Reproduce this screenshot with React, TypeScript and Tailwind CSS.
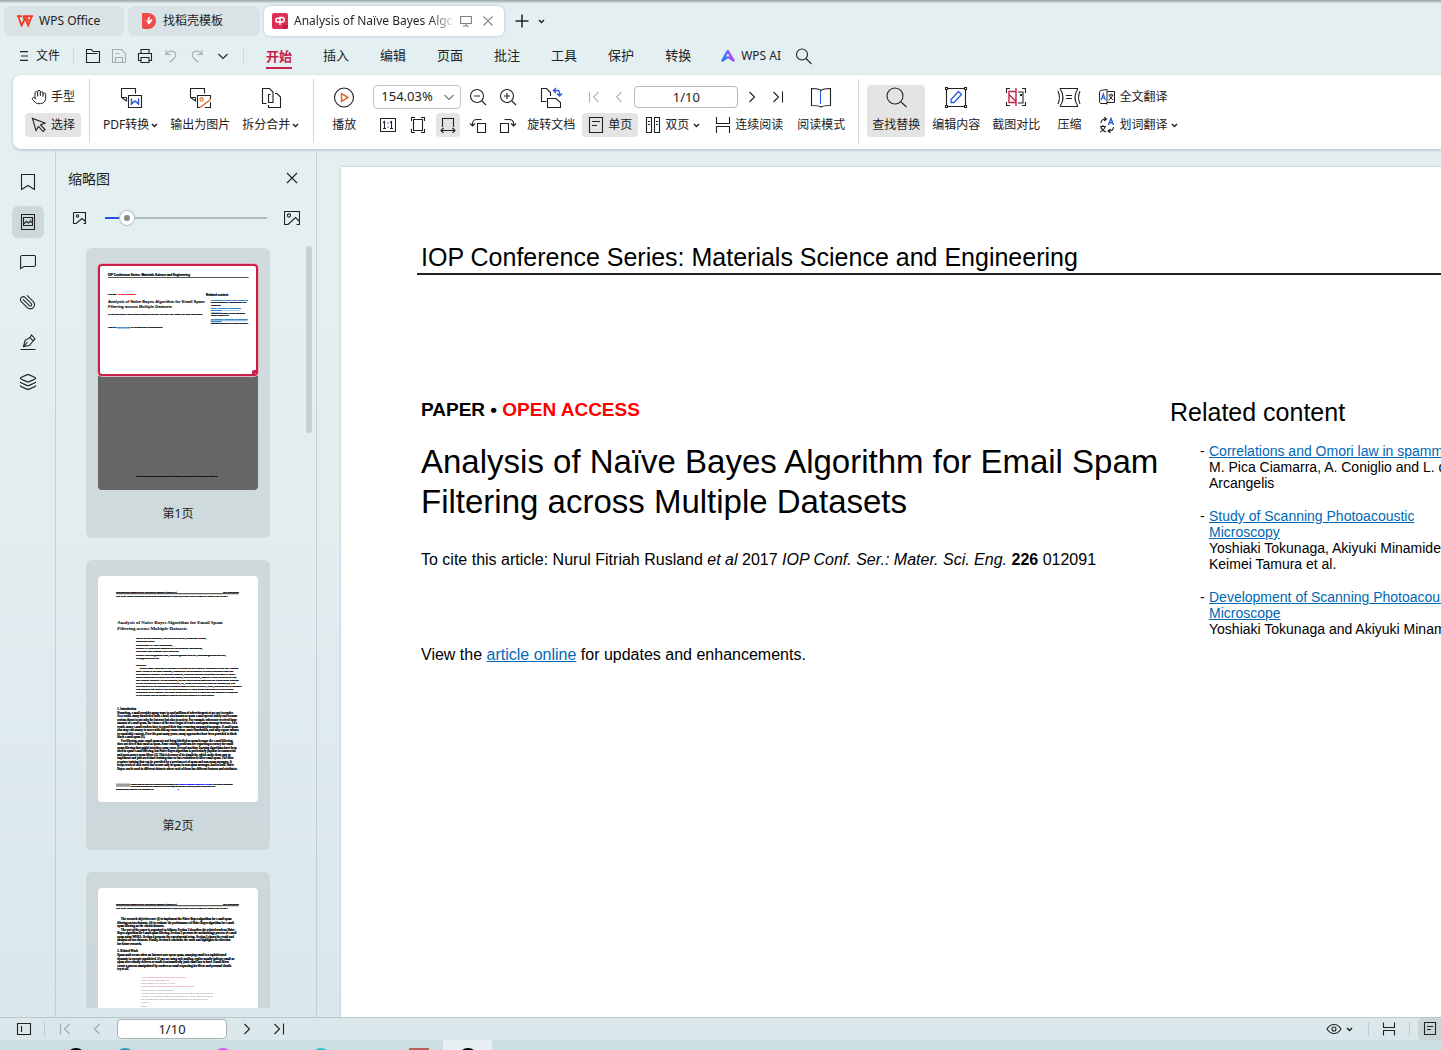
import type { ReactNode } from "react";
import { Hand, Layers, Paperclip } from "lucide-react";

type IconProps = { size?: number; className?: string; children: ReactNode };

const Icon = ({ size = 24, className = "", children }: IconProps) => (
  <svg
    width={size}
    height={size}
    viewBox={`0 0 ${size} ${size}`}
    fill="none"
    stroke="currentColor"
    strokeWidth="1.1"
    className={`shrink-0 ${className}`}
    aria-hidden="true"
  >
    {children}
  </svg>
);

const Caret = () => (
  <svg width="7" height="5" viewBox="0 0 7 5" fill="none" stroke="currentColor" strokeWidth="1.5" className="shrink-0" aria-hidden="true">
    <path d="M1 1l2.5 2.5L6 1" />
  </svg>
);

const ChevronDown = ({ className = "" }: { className?: string }) => (
  <Icon size={12} className={className}>
    <path d="M1.5 4L6 8.5 10.5 4" />
  </Icon>
);

const First = () => (
  <Icon size={16}>
    <path d="M3.5 2.5v11M12.5 3L7.5 8l5 5" />
  </Icon>
);
const Prev = () => (
  <Icon size={16}>
    <path d="M10.5 3L5.5 8l5 5" />
  </Icon>
);
const Next = () => (
  <Icon size={16}>
    <path d="M5.5 3l5 5-5 5" />
  </Icon>
);
const Last = () => (
  <Icon size={16}>
    <path d="M3.5 3l5 5-5 5M12.5 2.5v11" />
  </Icon>
);
const Close = ({ size = 12 }: { size?: number }) => (
  <Icon size={size}>
    <path d={size === 12 ? "M1.5 1.5l9 9M10.5 1.5l-9 9" : "M3 3l10 10M13 3L3 13"} />
  </Icon>
);

const SinglePage = () => (
  <Icon size={16}>
    <path d="M1.5 .5h13v15h-13zM4 4.5h8M4 8.5h5" />
  </Icon>
);
const Continuous = () => (
  <Icon size={16}>
    <path d="M1.5 0v6.5h13V0M1.5 16V9.5h13V16" />
  </Icon>
);

const Divider = ({ className = "" }: { className?: string }) => (
  <div className={`w-px shrink-0 bg-[#d3d8d9] ${className}`} />
);

/* Tall ribbon button: icon on top, label below */
const BigButton = ({ label, icon, caret, active }: { label: string; icon: ReactNode; caret?: boolean; active?: boolean }) => (
  <button className={`flex shrink-0 flex-col items-center gap-1 rounded ${active ? "bg-[#e4e4e4] px-[5px]" : ""}`}>
    <span className="flex h-6 items-center">{icon}</span>
    <span className="flex h-6 items-center gap-0.5">
      {label}
      {caret && <Caret />}
    </span>
  </button>
);

const menus = ["插入", "编辑", "页面", "批注", "工具", "保护", "转换"];

const TitleTabs = () => (
  <header className="flex shrink-0 items-end gap-1 bg-linear-to-b from-[#98a3a5] from-0% to-transparent to-10% px-1 pt-1.5">
    <button className="flex h-[30px] w-[120px] items-center gap-1.5 rounded-md bg-[#d9e2e4] pl-[13px]">
      <svg width="16" height="12" viewBox="0 0 16 12" fill="none" aria-hidden="true">
        <path d="M0 1.2h5M1.3 1.3l3.2 9.2L8 3.5l3.2 7 3.4-9.2M6 1.2h10M6.2 1.3L8 5.5M9.5 1.3l2 5" stroke="#f2361f" strokeWidth="1.8" />
      </svg>
      WPS Office
    </button>
    <button className="flex h-[30px] w-[132px] items-center gap-1.5 rounded-md bg-[#d9e2e4] pl-[13px]">
      <svg width="16" height="16" viewBox="0 0 16 16" aria-hidden="true">
        <path d="M1 0h6a8 8 0 0 1 0 16H3a2 2 0 0 1-2-2z" fill="#f04b4b" />
        <path d="M3.5 7.5c2 .2 3.3 1.8 3.8 4 2-1 4.2-3 4-5.5-1.5.3-2.7 1.2-3.3 2.5L9 3.5c-2 .7-2.8 2.5-2.2 5C6 7.7 4.7 7.2 3.5 7.5z" fill="#fff" />
      </svg>
      找稻壳模板
    </button>
    <div className="flex h-[30px] w-[240px] items-center rounded-md bg-white pl-2 pr-2.5 shadow-[0_0_3px_#aebcbf]">
      <svg width="16" height="16" viewBox="0 0 16 16" aria-hidden="true" className="shrink-0">
        <rect width="16" height="16" rx="2" fill="#dc3056" />
        <path d="M11 12h5v2a2 2 0 0 1-2 2h-3z" fill="#b81d40" />
        <path d="M8 12V4.5h2a2.3 2.3 0 0 1 0 4.6H5.8a1.9 1.9 0 0 1 0-3.800H8" fill="none" stroke="#fff" strokeWidth="1.5" />
      </svg>
      <span className="ml-1.5 min-w-0 flex-1 overflow-hidden whitespace-nowrap bg-linear-to-r from-[#222] from-85% to-[#ddd] bg-clip-text text-transparent">
        Analysis of Naïve Bayes Algorithm
      </span>
      <Icon size={12} className="ml-2 text-[#808080]">
        <path d="M.6 1.5h10.8v7H.6zM3 11h6M6 8.5V11" />
      </Icon>
      <button aria-label="关闭标签" className="ml-2.5 text-[#888]">
        <Close />
      </button>
    </div>
    <button aria-label="新建" className="ml-1.5 flex h-[30px] items-center">
      <Icon size={16}>
        <path d="M8 1.5v13M1.5 8h13" strokeWidth="1.5" />
      </Icon>
    </button>
    <button aria-label="标签列表" className="ml-1 flex h-[30px] items-center">
      <Caret />
    </button>
  </header>
);

const MenuBar = () => (
  <nav className="flex h-[39px] shrink-0 items-center pl-[19px]">
    <button className="flex items-center gap-[7px]">
      <Icon size={10}>
        <path d="M1 .6h8M2 5h7M1 9.4h8" />
      </Icon>
      文件
    </button>
    <Divider className="ml-[13px] mr-[9px] h-4" />
    <div className="flex items-center gap-1.5">
      {/* quick access: open, save, print, undo, redo */}
      <button aria-label="打开" className="flex w-5 justify-center">
        <Icon size={16}>
          <path d="M1.5 14.5v-13h5l1.500 2h6.500v11zM1.500 5.500h11" />
        </Icon>
      </button>
      <button aria-label="保存" className="flex w-5 justify-center text-[#a3acae]">
        <Icon size={16}>
          <path d="M1.5 1.5h9l4 4v9h-13zM4.500 14.500v-5h7v5M4.500 5.500h4" />
        </Icon>
      </button>
      <button aria-label="打印" className="flex w-5 justify-center">
        <Icon size={16}>
          <path d="M4 5.5v-4h8v4M3.500 12.500h-2v-7h13v7h-2M4 9.500h8v5H4z" />
        </Icon>
      </button>
      <button aria-label="撤销" className="flex w-5 justify-center text-[#a3acae]">
        <Icon size={16}>
          <path d="M3 2v4.500h4.500M3 6.500C5 3.500 8 2.500 10.500 3.500s3 4.500 1 6.500l-5 4.500" />
        </Icon>
      </button>
      <button aria-label="恢复" className="flex w-5 justify-center text-[#a3acae]">
        <Icon size={16}>
          <path d="M13 2v4.500H8.500M13 6.500C11 3.500 8 2.500 5.500 3.500s-3 4.500-1 6.500l5 4.500" />
        </Icon>
      </button>
      <button aria-label="更多" className="flex w-5 justify-center">
        <ChevronDown />
      </button>
    </div>
    <Divider className="ml-2.5 mr-[22px] h-4" />
    <div className="flex items-center gap-[31px] text-[13px]">
      <button className="border-y-2 border-t-transparent border-b-[#c8204a] py-px font-bold leading-5 text-[#c8204a]">开始</button>
      {menus.map((m) => (
        <button key={m}>{m}</button>
      ))}
    </div>
    <button className="ml-[30px] flex items-center gap-1.5">
      <svg width="14" height="12" viewBox="0 0 14 12" fill="none" aria-hidden="true">
        <path d="M1.500 10.500L6.500 1.500h1.500" stroke="#4b6bff" strokeWidth="2.400" strokeLinejoin="round" />
        <path d="M7 1.500l5.500 9M12.500 10.500L8 7.500" stroke="#a250f5" strokeWidth="2.400" strokeLinecap="round" />
        <path d="M1.500 10.500l4.500-3" stroke="#2b7bf5" strokeWidth="2.400" strokeLinecap="round" />
      </svg>
      WPS AI
    </button>
    <button aria-label="搜索" className="ml-3.5">
      <Icon size={18}>
        <circle cx="7" cy="7.5" r="5.5" />
        <path d="M11 11.500l5.500 5.500" />
      </Icon>
    </button>
  </nav>
);

const Ribbon = () => (
  <div className="ml-[13px] flex shrink-0 items-stretch whitespace-nowrap rounded-l-lg bg-white pb-3 pl-3 pt-2.5 shadow-[0_1px_3px_#aab9bc]">
    <div className="flex w-14 shrink-0 flex-col gap-1">
      <button className="flex h-6 items-center gap-1 rounded pl-1.5">
        <Hand size={16} strokeWidth={1.5} />
        手型
      </button>
      <button className="flex h-6 items-center gap-1 rounded bg-[#e4e4e4] pl-1.5">
        <Icon size={16}>
          <path d="M1.500 1.500l3.500 12 2.500-4 4.500 5 2-2-4.500-4.500 4.500-2z" />
        </Icon>
        选择
      </button>
    </div>
    <Divider className="-my-1.5 ml-2 mr-[13px]" />

    <div className="flex gap-3">
      <BigButton
        label="PDF转换"
        caret
        icon={
          <Icon>
            <path d="M7.500 12.500v3.500l-5-3.500v-9h14v5M2.500 12.500h5" />
            <path d="M9.500 10.500h13v12h-13z" />
            <path d="M12.500 13.500v5.500l3.500-3 3.500 3v-5.500" stroke="#2b5be0" strokeWidth="1.500" />
          </Icon>
        }
      />
      <BigButton
        label="输出为图片"
        icon={
          <Icon>
            <path d="M7.500 12.500v3.500l-5-3.500v-9h14v5M2.500 12.500h5" />
            <path d="M22.500 14v-3.500h-13v12H12M17 22.500h5.500V17" />
            <path d="M12 22.500l10.500-8" stroke="#e0672c" strokeWidth="1.400" />
            <circle cx="13.500" cy="14.500" r="1.600" stroke="#e0672c" />
          </Icon>
        }
      />
      <BigButton
        label="拆分合并"
        caret
        icon={
          <Icon>
            <path d="M7.500 18.500h-4v-15h7l3.500 3.500v10.500h-4.500v-8h2" />
            <path d="M16 8.500h2l3.500 3.500v10.500h-12V20" />
          </Icon>
        }
      />
    </div>
    <Divider className="-my-1.5 ml-3.5 mr-[18px]" />

    <BigButton
      label="播放"
      icon={
        <Icon>
          <circle cx="12" cy="12.5" r="9.5" />
          <path d="M9.5 8.5v8l6.500-4z" stroke="#e0672c" strokeWidth="1.500" />
        </Icon>
      }
    />
    <div className="ml-[17px] flex w-[88px] shrink-0 flex-col gap-1">
      <div className="grid h-6 items-center">
        <select aria-label="缩放比例" defaultValue="154.03%" className="col-start-1 row-start-1 h-6 w-full appearance-none rounded border border-[#c4c4c4] bg-white pl-[7px] text-[13px]">
          <option>154.03%</option>
        </select>
        <ChevronDown className="pointer-events-none col-start-1 row-start-1 mr-1.5 justify-self-end text-[#777]" />
      </div>
      <div className="flex gap-1.5 pl-[3px]">
        <button aria-label="实际大小" className="flex h-6 w-6 items-center justify-center">
          <Icon size={16}>
            <path d="M.5 1.500h15v13H.5zM3 5.500l1.500-1v7M3 11.500h3M10 5.500l1.500-1v7M10 11.500h3" />
            <path d="M8 5.500V7M8 9.500V11" stroke="#2b5be0" />
          </Icon>
        </button>
        <button aria-label="适合页面" className="flex h-6 w-6 items-center justify-center">
          <Icon size={16}>
            <path d="M3.500 2.500h9v11h-9zM1.500 4V.5H5M11 .5h3.500V4M14.500 12v3.500H11M5 15.500H1.500V12" />
          </Icon>
        </button>
        <button aria-label="适合宽度" className="flex h-6 w-6 items-center justify-center rounded bg-[#e4e4e4]">
          <Icon size={16}>
            <path d="M2.500 10V1.500h11V10M1 13.500h14M3.500 11L1 13.500 3.500 16M12.500 11l2.500 2.500-2.500 2.500" />
          </Icon>
        </button>
      </div>
    </div>
    <div className="ml-[5px] flex flex-col gap-1">
      <button aria-label="缩小" className="flex h-6 w-6 items-center justify-center">
        <Icon size={18}>
          <circle cx="8" cy="8" r="6.500" />
          <path d="M5 8h6M13 13l4 4" />
        </Icon>
      </button>
      <button aria-label="向左旋转" className="flex h-6 w-6 items-center justify-center">
        <Icon size={18}>
          <path d="M8.500 7.500h8v9h-8zM12.500 3.500H8c-2.500 0-4.500 1.500-4.500 4V10M1 7.500L3.500 10 6 7.500" />
        </Icon>
      </button>
    </div>
    <div className="ml-1.5 flex flex-col gap-1">
      <button aria-label="放大" className="flex h-6 w-6 items-center justify-center">
        <Icon size={18}>
          <circle cx="8" cy="8" r="6.500" />
          <path d="M5 8h6M8 5v6M13 13l4 4" />
        </Icon>
      </button>
      <button aria-label="向右旋转" className="flex h-6 w-6 items-center justify-center">
        <Icon size={18}>
          <path d="M1.500 7.500h8v9h-8zM5.500 3.500H10c2.500 0 4.500 1.500 4.500 4V10M12 7.500L14.500 10 17 7.500" />
        </Icon>
      </button>
    </div>
    <div className="ml-[7px] flex">
      <BigButton
        label="旋转文档"
        icon={
          <Icon>
            <path d="M7.500 16.500h-5v-13h5l4 4V11" />
            <path d="M8.500 13.500h8.500l4.500 4v5h-13z" />
            <path d="M14.500 5.500h4c1.500 0 2 .8 2 2v3M17 3l-2.500 2.500L17 8M18 8.500l2.500 2.500L23 8.500" stroke="#2b5be0" strokeWidth="1.400" />
          </Icon>
        }
      />
    </div>

    <div className="ml-[7px] flex shrink-0 flex-col gap-1">
      <div className="flex h-6 items-center pl-1">
        <button aria-label="首页" className="text-[#b5b5b5]"><First /></button>
        <button aria-label="上一页" className="ml-[9px] text-[#b5b5b5]"><Prev /></button>
        <input aria-label="页码" defaultValue="1/10" className="ml-[7px] h-[22px] w-[104px] rounded border border-[#b8b8b8] text-center text-[13px]" />
        <button aria-label="下一页" className="ml-1.5"><Next /></button>
        <button aria-label="末页" className="ml-2.5"><Last /></button>
      </div>
      <div className="flex">
        <button className="flex h-6 items-center gap-1 rounded bg-[#e4e4e4] px-1.5">
          <SinglePage />
          单页
        </button>
        <button className="ml-[7px] flex h-6 items-center gap-1">
          <Icon size={16}>
            <path d="M1.500.5h5v15h-5zM9.500.5h5v15h-5zM3 4.500h2M3 7.500h2M11 4.500h2M11 7.500h2" />
          </Icon>
          双页
          <Caret />
        </button>
        <button className="ml-[15px] flex h-6 items-center gap-1">
          <Continuous />
          连续阅读
        </button>
      </div>
    </div>
    <div className="ml-[11px] flex">
      <BigButton
        label="阅读模式"
        icon={
          <Icon>
            <path d="M12 5.500c-2-2-5-2-9.500-2v17c4.500 0 7.500 0 9.500 1.500 2-1.500 5-1.500 9.500-1.500v-17c-4.500 0-7.500 0-9.500 2z" />
            <path d="M11.500 6v13" stroke="#2b5be0" />
          </Icon>
        }
      />
    </div>
    <Divider className="-my-1.5 ml-[13px] mr-2" />

    <BigButton
      label="查找替换"
      active
      icon={
        <Icon>
          <circle cx="11" cy="11" r="8" />
          <path d="M17 17l5.500 5" />
        </Icon>
      }
    />
    <div className="ml-[7px] flex gap-3">
      <BigButton
        label="编辑内容"
        icon={
          <Icon>
            <path d="M4 3.500h16M4 21.500h16M2.500 5v15M21.500 5v15M1.500 2.500h2v2h-2zM20.500 2.500h2v2h-2zM1.500 20.500h2v2h-2zM20.500 20.500h2v2h-2z" />
            <path d="M7 17.500v-3l7.500-8 3 3-7.500 8z" stroke="#2b5be0" strokeWidth="1.300" />
          </Icon>
        }
      />
      <BigButton
        label="截图对比"
        icon={
          <Icon>
            <path d="M2.500 8V3.500H6M18 3.500h3.500V8M21.500 17v3.500H18M6 20.500H2.500V17M14 7h5v11h-5M16.500 9.500h1v1h-1z" />
            <path d="M12 3v18M12 6.500H5v11h7M5 9.500l7 7" stroke="#c8204a" strokeWidth="1.400" />
          </Icon>
        }
      />
    </div>
    <div className="ml-[17px] flex">
      <BigButton
        label="压缩"
        icon={
          <Icon>
            <path d="M3 3.500h18M3 21.500h18M3 3.500c4 6 4 12 0 18M21 3.500c-4 6-4 12 0 18M1 6c2 4.500 2 8.500 0 13M23 6c-2 4.500-2 8.500 0 13M9 10.500h6M9 13.500h6" />
          </Icon>
        }
      />
    </div>
    <div className="ml-[18px] flex flex-col gap-1">
      <button className="flex h-6 items-center gap-1">
        <Icon size={16}>
          <path d="M8 14.500H1.500L.6 13V3L1.500 1.500l6.500-1v15M8 2.500h7.500v11H8M9.500 6h5M12 4.500V6M13.500 6c-.5 2.500-2 4-4 5M10.500 6.500c.5 2 2 3.500 4 4.500" strokeWidth="1" />
          <path d="M2.300 11l2-6 2 6M2.900 9h2.800" stroke="#2b5be0" strokeWidth="1.200" />
        </Icon>
        全文翻译
      </button>
      <button className="flex h-6 items-center gap-1">
        <Icon size={16}>
          <path d="M2 6c0-3 2-4 5-4M5 0l2.500 2L5 4M14.500 10c0 3-2 4-5 4M11.500 12L9 14l2.500 2M1 9.500h6M4 8v1.500M6 9.500c-.5 2.500-2.500 4.500-5 5.500M2 10c.5 2 2.500 4 5 5" />
          <path d="M9.500 8l2.500-6.500 2.500 6.500M10.300 5.800h3.400" stroke="#2b5be0" strokeWidth="1.400" />
        </Icon>
        划词翻译
        <Caret />
      </button>
    </div>
  </div>
);

const railItems: { label: string; active?: boolean; icon: ReactNode }[] = [
  { label: "书签", icon: <Icon size={16}><path d="M1.500 .5h13v15L8 11.500l-6.500 4z" /></Icon> },
  {
    label: "缩略图",
    active: true,
    icon: <Icon size={16}><path d="M1.500.5h13v15h-13zM3.500 3.500h9v8h-9zM3.500 10l3-2.500 2 1.500 2-2 2 2M10.500 5.500h.6" /></Icon>,
  },
  { label: "批注", icon: <Icon size={16}><path d="M2 1.500h12q1.500 0 1.500 1.500v8q0 1.500-1.500 1.500H4L.6 14.500V3q0-1.500 1.500-1.500z" /></Icon> },
  { label: "附件", icon: <Paperclip size={17} strokeWidth={1.5} className="-rotate-90" /> },
  { label: "签名", icon: <Icon size={16}><path d="M.5 15.500h15M3.500 12.500l1.500-6 5-3 3 3.500-3.500 4.500-6 1zM3.500 12.500l4-4.500M10 3.500L11.500 1 15 5l-2 2" /></Icon> },
  { label: "图层", icon: <Layers size={18} strokeWidth={1.500} /> },
];

const Rail = () => (
  <aside className="flex w-14 shrink-0 flex-col items-center gap-2 border-r border-[#c3cfd2] pt-4">
    {railItems.map((item) => (
      <button key={item.label} aria-label={item.label} className={`flex h-8 w-8 items-center justify-center rounded-md ${item.active ? "bg-[#cdd8da]" : ""}`}>
        {item.icon}
      </button>
    ))}
  </aside>
);

const abstractLines = [
  "    E-mail spam continues to become a problem on the Internet. Spammed e-mail may contain",
  "many copies of the same message, commercial advertisement or other irrelevant posts like",
  "pornographic content. In previous research, different filtering techniques are used to detect",
  "these e-mails such as using Random Forest, Naïve Bayesian, Support Vector Machine (SVM)",
  "and Neutral Network. In this research, we test Naïve Bayes algorithm for e-mail spam filtering",
  "on two datasets and test its performance, i.e., Spam Data and SPAMBASE datasets [8]. The",
  "performance of the datasets is evaluated based on their accuracy, recall, precision and F-measure.",
  "Our research use WEKA tool for the evaluation of Naïve Bayes algorithm for e-mail spam",
  "filtering on both datasets. The result shows that the type of email and the number of instances",
  "of the dataset has an influence towards the performance of Naïve Bayes.",
];

const introLines = [
  "Nowadays, e-mail provides many ways to send millions of advertisement at no cost to sender.",
  "As a result, many unsolicited bulk e-mail, also known as spam e-mail spread widely and become",
  "serious threat to not only the Internet but also to society. For example, when user received large",
  "amount of e-mail spam, the chance of the user forgot to read a non-spam message increase. As a",
  "result, many e-mail readers have to spend their time removing unwanted messages. E-mail spam",
  "also may cost money to users with dial-up connections, waste bandwidth, and may expose minors",
  "to unsuitable content. Over the past many years, many approaches have been provided to block",
  "block e-mail spam [1].",
  "    For filtering, some email spam are not being labelled as spam because the e-mail filtering",
  "does not detect that email as spam. Some existing problems are regarding accuracy for email",
  "spam filtering that might introduce some error. Several machine learning algorithms have been",
  "used in spam e-mail filtering, but Naïve Bayes algorithm is particularly popular in commercial",
  "and open-source spam filters [2]. This is because of its simplicity, which make them easy to",
  "implement and just need short training time or fast evaluation to filter email spam. The filter",
  "requires training that can be provided by a previous set of spam and non-spam messages. It",
  "keeps track of each word that occurs only in spam, in non-spam messages, and in both. Naïve",
  "Bayes can be used in different datasets where each of them has different features and attributes.",
];

const objectiveLines = [
  "    The research objectives are: (i) to implement the Naïve Bayes algorithm for e-mail spam",
  "filtering on two datasets, (ii) to evaluate the performance of Naïve Bayes algorithm for e-mail",
  "spam filtering on the chosen datasets.",
  "    The rest of the paper is organized as follows: Section 2 describes the related work on Naïve",
  "Bayes algorithm for e-mail spam filtering. Section 3 presents the methodology process of e-mail",
  "spam using WEKA. Section 4 presents the experimental setup. Section 5 shows the result and",
  "analysis on two datasets. Finally, Section 6 concludes the work and highlights the direction",
  "for future research.",
];

const relatedLines = [
  "Spam mail occurs when an Internet user opens spam, annoying email is a sophisticated",
  "dynamic to operate unsolicited. If you are using web mailing, replies usually indicate email as",
  "spam after usually delivers or sends it automatically junk email box to have. Email filters",
  "create a process manipulated by senders as email requesting for filters and personal details",
  "try at all.",
];

const mailLines = [
  { text: "From: notifications@mail.support.com on behalf of", pink: true },
  { text: "Sent: service@mail.update.com", pink: true },
  { text: "Sent: Tuesday, July 28, 2009 4:49 PM", pink: false },
  { text: "Subject: Mailbox Exceeded Limit www.account.service.com", pink: true },
  { text: "Dear subscriber, email account user,", pink: false },
  { text: "We are currently verifying your subscriber email accounts in order to increase the", pink: false },
  { text: "efficiency of our webmail features. During this course you are required to provide", pink: false },
  { text: "the verification desk with the following details so that your account could be", pink: false },
  { text: "verified:", pink: false },
  { text: "Name: ................", pink: false },
];

const Lines = ({ lines, x, y, pitch }: { lines: string[]; x: number; y: number; pitch: number }) => (
  <>
    {lines.map((line, i) => (
      <text key={line} x={line.startsWith(" ") ? x + 14 : x} y={y + i * pitch}>
        {line.trim()}
      </text>
    ))}
  </>
);

const PageHeader = () => (
  <g fontSize="9">
    <text x="67" y="62">International Research and Innovation Summit (IRIS2017)</text>
    <text x="523" y="62" textAnchor="end">IOP Publishing</text>
    <path d="M67 66h456" strokeWidth="3" />
    <text x="67" y="77">IOP Conf. Series: Materials Science and Engineering 226 (2017) 012091   doi:10.1088/1757-899X/226/1/012091</text>
  </g>
);

const PageOne = () => (
  <svg viewBox="0 0 595 842" preserveAspectRatio="none" stroke="#000" strokeWidth="0.8" className="block h-[226px] w-full rounded bg-[#666] font-['Liberation_Sans',sans-serif] font-bold" aria-hidden="true">
    <path d="M0 0h595v415H0z" fill="#fff" stroke="none" />
    <text x="37" y="46" fontSize="11">IOP Conference Series: Materials Science and Engineering</text>
    <path d="M37 50h523" stroke="#555" strokeWidth="4" />
    <text x="37" y="117" fontSize="9">PAPER • <tspan fill="#f00" stroke="#f00">OPEN ACCESS</tspan></text>
    <g fontSize="15" strokeWidth="0.3">
      <text x="37" y="146">Analysis of Naïve Bayes Algorithm for Email Spam</text>
      <text x="37" y="164">Filtering across Multiple Datasets</text>
    </g>
    <text x="37" y="191" fontSize="8">To cite this article: Nurul Fitriah Rusland et al 2017 IOP Conf. Ser.: Mater. Sci. Eng. 226 012091</text>
    <text x="37" y="237" fontSize="8">View the <tspan fill="#1271c4" stroke="#1271c4" textDecoration="underline">article online</tspan> for updates and enhancements.</text>
    <text x="402" y="120" fontSize="11">Related content</text>
    <g fontSize="7">
      <g fill="#1271c4" stroke="#1271c4" textDecoration="underline">
        <text x="420" y="139">Correlations and Omori law in spamming</text>
        <text x="420" y="168">Study of Scanning Photoacoustic</text>
        <text x="420" y="176">Microscopy</text>
        <text x="420" y="208">Development of Scanning Photoacoustic</text>
        <text x="420" y="216">Microscope</text>
      </g>
      <text x="420" y="147">M. Pica Ciamarra, A. Coniglio and L. de</text>
      <text x="420" y="155">Arcangelis</text>
      <text x="420" y="185">Yoshiaki Tokunaga, Akiyuki Minamide,</text>
      <text x="420" y="194">Keimei Tamura et al.</text>
      <text x="420" y="225">Yoshiaki Tokunaga and Akiyuki Minamide</text>
    </g>
    <text x="141" y="794" fontSize="8">This content was downloaded from IP address 103.31.34.2 on 06/09/2017 at 03:18</text>
  </svg>
);

const PageTwo = () => (
  <svg viewBox="0 0 595 842" preserveAspectRatio="none" stroke="#000" strokeWidth="0.8" className="block h-[226px] w-full rounded bg-white font-['Liberation_Serif',serif] font-bold" aria-hidden="true">
    <PageHeader />
    <g fontSize="18" strokeWidth="0.2">
      <text x="72" y="178">Analysis of Naïve Bayes Algorithm for Email Spam</text>
      <text x="72" y="200">Filtering across Multiple Datasets</text>
    </g>
    <g fontSize="10">
      <Lines x={141} y={234} pitch={11} lines={["Nurul Fitriah Rusland, Norfaradilla Wahid, Shahreen Kasim,", "Hanayanti Hafit"]} />
      <Lines x={141} y={260} pitch={11} lines={["Department of Web Technology,", "Faculty of Computer Science and Information Technology,", "Universiti Tun Hussein Onn Malaysia"]} />
      <Lines x={141} y={298} pitch={11} lines={["E-mail: nfitriah@gmail.com, faradila@uthm.edu.my, shahreen@uthm.edu.my,", "hana@uthm.edu.my"]} />
      <text x="141" y="335">Abstract.</text>
      <g fontSize="9.5">
        <Lines x={141} y={347} pitch={11} lines={abstractLines} />
      </g>
    </g>
    <g fontSize="11">
      <text x="72" y="501">1. Introduction</text>
      <Lines x={72} y={513} pitch={13} lines={introLines} />
    </g>
    <path d="M67 773h52v12H67z" fill="#999" stroke="none" />
    <g fontSize="7">
      <text x="121" y="779">Content from this work may be used under the terms of the <tspan fill="#00f" stroke="#00f">Creative Commons Attribution 3.0 licence</tspan>. Any further distribution</text>
      <text x="121" y="788">of this work must maintain attribution to the author(s) and the title of the work, journal citation and DOI.</text>
      <text x="67" y="797">Published under licence by IOP Publishing Ltd</text>
      <text x="297" y="797">1</text>
    </g>
  </svg>
);

const PageThree = () => (
  <svg viewBox="0 0 595 842" preserveAspectRatio="none" stroke="#000" strokeWidth="0.8" className="block h-[226px] w-full rounded bg-white font-['Liberation_Serif',serif] font-bold" aria-hidden="true">
    <PageHeader />
    <g fontSize="11">
      <Lines x={72} y={121} pitch={13} lines={objectiveLines} />
      <text x="72" y="240">2. Related Work</text>
      <Lines x={72} y={254} pitch={13} lines={relatedLines} />
    </g>
    <g fontSize="7.5" fontWeight="400" fontFamily="Liberation Sans, sans-serif" stroke="none">
      {mailLines.map((l, i) => (
        <text key={l.text} x="161" y={334 + i * 12} fill={l.pink ? "#d8486a" : "#777"}>
          {l.text}
        </text>
      ))}
    </g>
  </svg>
);

const thumbs = [
  { label: "第1页", page: <PageOne />, selected: true },
  { label: "第2页", page: <PageTwo />, selected: false },
  { label: "第3页", page: <PageThree />, selected: false },
];

const ThumbnailPanel = () => (
  <section className="flex min-h-0 w-[261px] shrink-0 flex-col border-r border-[#c3cfd2]">
    <div className="flex h-14 shrink-0 items-center justify-between pl-3 pr-4">
      <h2 className="pt-0.5 text-sm">缩略图</h2>
      <button aria-label="关闭">
        <Close size={16} />
      </button>
    </div>
    <div className="flex h-6 shrink-0 items-center pl-4 pr-4">
      <Icon size={16}>
        <path d="M1.500 2.500h12v11h-2M4 13.500H1.500v-11M4 13.500l6-5 3.500 3" />
        <circle cx="5.500" cy="6" r="1.200" />
      </Icon>
      <input
        type="range"
        aria-label="缩略图大小"
        defaultValue={10}
        className="ml-[17px] mr-[17px] h-0.5 min-w-0 flex-1 appearance-none bg-linear-to-r from-[#1f56e0] from-13% to-[#aebabd] to-13% [&::-webkit-slider-thumb]:h-3.5 [&::-webkit-slider-thumb]:w-3.5 [&::-webkit-slider-thumb]:appearance-none [&::-webkit-slider-thumb]:rounded-full [&::-webkit-slider-thumb]:border-4 [&::-webkit-slider-thumb]:border-white [&::-webkit-slider-thumb]:bg-[#8a8a8a] [&::-webkit-slider-thumb]:shadow-[0_0_0_1px_#b5bfc1]"
      />
      <Icon size={16}>
        <path d="M4 14.500H.5v-13h15v13h-3M4 14.500l7.500-7 4 4" />
        <circle cx="5" cy="5.500" r="1.600" />
      </Icon>
    </div>
    <div className="mb-[9px] mt-4 flex min-h-0 flex-1 justify-between pl-[30px] pr-1">
      <div className="flex w-[184px] flex-col gap-[22px] overflow-hidden pt-0.5">
        {thumbs.map((t) => (
          <button key={t.label} className="relative shrink-0 rounded-md bg-[#b8c4c5]/45 px-3 pb-3 pt-4">
            {t.page}
            {t.selected && (
              <span className="absolute inset-x-3 top-4 flex h-28 items-end justify-end overflow-hidden rounded border-2 border-[#c8204a] shadow-[0_0_0_1px_#e3b5c0]">
                <span className="h-1 w-1 rounded-tl-xs bg-[#c8204a]" />
              </span>
            )}
            <span className="mt-3 block leading-6">{t.label}</span>
          </button>
        ))}
      </div>
      <div className="h-[187px] w-1.5 rounded-full bg-[#c5d0d2]" />
    </div>
  </section>
);

const related = [
  { title: ["Correlations and Omori law in spamming"], authors: ["M. Pica Ciamarra, A. Coniglio and L. de", "Arcangelis"] },
  { title: ["Study of Scanning Photoacoustic", "Microscopy"], authors: ["Yoshiaki Tokunaga, Akiyuki Minamide,", "Keimei Tamura et al."] },
  { title: ["Development of Scanning Photoacoustic", "Microscope"], authors: ["Yoshiaki Tokunaga and Akiyuki Minamide"] },
];

const DocumentView = () => (
  <main className="flex min-w-0 flex-1 overflow-hidden pl-6 pt-[17px]">
    <article className="min-w-[1240px] flex-1 bg-white pl-[76px] pt-[74px] font-['Liberation_Sans',sans-serif] text-black shadow-[0_0_2px_#a9b6b9]">
      <div className="border-b-2 border-[#222] pl-1 text-[25px] leading-8">IOP Conference Series: Materials Science and Engineering</div>
      <div className="flex pl-1 pt-[123px]">
        <div className="w-[749px] shrink-0 text-base leading-6">
          <p className="text-[19px] font-bold leading-6">
            PAPER • <span className="text-[#f00]">OPEN ACCESS</span>
          </p>
          <h1 className="mt-5 text-[33px] leading-10">
            Analysis of Naïve Bayes Algorithm for Email Spam
            <br />
            Filtering across Multiple Datasets
          </h1>
          <p className="mt-[26px]">
            To cite this article: Nurul Fitriah Rusland <i>et al</i> 2017 <i>IOP Conf. Ser.: Mater. Sci. Eng.</i> <b>226</b> 012091
          </p>
          <p className="mt-[71px]">
            View the <a href="#" className="text-[#0068b4] underline">article online</a> for updates and enhancements.
          </p>
        </div>
        <div className="whitespace-nowrap">
          <h2 className="text-[25px] leading-7">Related content</h2>
          <ul className="mt-[17px] flex flex-col gap-[17px] pl-[30px] text-sm leading-4">
            {related.map((r) => (
              <li key={r.title[0]} className="flex">
                <span className="w-[9px]">-</span>
                <div>
                  <a href="#" className="block text-[#0068b4] underline">
                    {r.title.map((t) => <span key={t} className="block">{t}</span>)}
                  </a>
                  {r.authors.map((a) => <div key={a}>{a}</div>)}
                </div>
              </li>
            ))}
          </ul>
        </div>
      </div>
    </article>
  </main>
);

const StatusBar = () => (
  <footer className="flex h-[23px] shrink-0 items-center border-t border-[#b9c6ca] pl-4">
    <button aria-label="侧栏">
      <Icon size={16}>
        <path d="M1.500 2.500h13v11h-13zM5.500 5v6" />
      </Icon>
    </button>
    <Divider className="ml-3 h-3.5 !bg-[#bfcbce]" />
    <button aria-label="首页" className="ml-3 text-[#9faaad]"><First /></button>
    <button aria-label="上一页" className="ml-4 text-[#9faaad]"><Prev /></button>
    <input aria-label="当前页码" defaultValue="1/10" className="ml-3 h-5 w-[110px] rounded border border-[#a9b3b5] bg-white text-center text-[13px]" />
    <button aria-label="下一页" className="ml-3"><Next /></button>
    <button aria-label="末页" className="ml-4"><Last /></button>
    <button aria-label="护眼模式" className="ml-auto flex items-center gap-1">
      <Icon size={16}>
        <path d="M1 8c3.500-6 10.500-6 14 0-3.500 6-10.500 6-14 0z" />
        <circle cx="8" cy="8" r="2" />
      </Icon>
      <Caret />
    </button>
    <Divider className="ml-[15px] h-3.5 !bg-[#bfcbce]" />
    <button aria-label="连续阅读" className="ml-3">
      <Icon size={16}>
        <path d="M2.500 1.500v5h11v-5M2.500 14.500v-5h11v5" />
      </Icon>
    </button>
    <Divider className="ml-3 h-3.5 !bg-[#bfcbce]" />
    <button aria-label="单页" className="ml-2 flex h-full w-[23px] items-center justify-center rounded-l bg-[#cbd5d8]">
      <Icon size={14}>
        <path d="M1.500 .5h11v12h-11zM4 4.500h6M4 7.500h4" />
      </Icon>
    </button>
  </footer>
);

const apps = [
  "bg-black",
  "bg-[#2a9ab8]",
  "bg-transparent",
  "bg-[#d55cf0]",
  "bg-transparent",
  "bg-[#25c4cf]",
  "bg-transparent",
  "rounded-none! bg-[#b9625c]",
  "bg-black",
];

const Taskbar = () => (
  <div className="flex h-2.5 shrink-0 overflow-hidden bg-[#ccdde3] pl-[51px]">
    {apps.map((color, i) => (
      <div key={i} className={`flex h-10 w-[49px] justify-center pt-2 ${i === apps.length - 1 ? "bg-[#e9f0f3]" : ""}`}>
        <div className={`h-5 w-5 rounded-full ${color}`} />
      </div>
    ))}
  </div>
);

const App = () => (
  <div className="flex h-screen flex-col overflow-hidden bg-linear-to-b from-[#e4eff1] from-30% to-[#dae7eb] font-['Noto_Sans','Noto_Sans_CJK_SC',sans-serif] text-xs text-[#222]">
    <TitleTabs />
    <MenuBar />
    <Ribbon />
    <div className="flex min-h-0 flex-1 pt-px">
      <Rail />
      <ThumbnailPanel />
      <DocumentView />
    </div>
    <StatusBar />
    <Taskbar />
  </div>
);

export default App;
